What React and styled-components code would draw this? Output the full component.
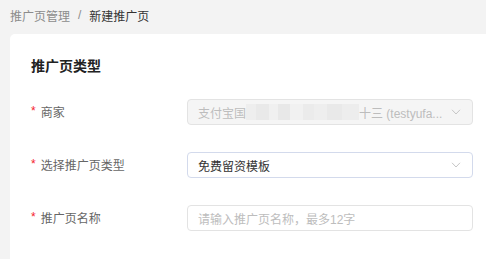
import React from "react";
import styled, { createGlobalStyle } from "styled-components";

const Global = createGlobalStyle`
  html, body {
    margin: 0;
    padding: 0;
    background: #f3f3f3;
    font-family: "Liberation Sans", "Noto Sans CJK SC", sans-serif;
  }
`;

const Page = styled.div`
  width: 486px;
  height: 259px;
  overflow: hidden;
  padding-left: 10px;
  box-sizing: border-box;
`;

const Breadcrumb = styled.div`
  height: 30px;
  margin-bottom: 4px;
  display: flex;
  align-items: center;
  gap: 8px;
  font-size: 12px;
  color: #8c8c8c;
`;

const Current = styled.span`
  color: #333;
`;

const Card = styled.div`
  background: #fff;
  border-radius: 5px 0 0 0;
  padding: 20px 13px 0 21px;
  height: 240px;
`;

const Title = styled.div`
  font-size: 14px;
  font-weight: 700;
  color: #222;
  line-height: 24px;
  margin-bottom: 21px;
`;

const Row = styled.div`
  display: flex;
  align-items: center;
  margin-bottom: 27px;
`;

const Label = styled.div`
  width: 156px;
  font-size: 12px;
  color: #666;
  display: flex;
  align-items: center;
  gap: 5px;
  margin-top: -2px;
`;

const Star = styled.span`
  color: #f5222d;
  font-size: 12px;
`;

const Field = styled.div`
  flex: 1;
  height: 26px;
  box-sizing: border-box;
  border: 1px solid ${(p) => p.$border || "#e3e3e3"};
  background: ${(p) => (p.$disabled ? "#f5f5f5" : "#fff")};
  border-radius: 4px;
  display: flex;
  align-items: center;
  padding: 0 11px 0 10px;
  font-size: 12px;
  color: ${(p) => (p.$muted ? "#bdbdbd" : "#333")};
  white-space: nowrap;
  overflow: hidden;
`;

const Value = styled.div`
  flex: 1;
  display: flex;
  align-items: center;
  overflow: hidden;
`;

const Blur = styled.span`
  display: inline-block;
  width: ${(p) => p.$w}px;
  height: 16px;
  background: ${(p) => p.$c};
`;

const Arrow = () => (
  <svg width="10" height="6" viewBox="0 0 10 6">
    <path d="M1 0.8 L5 5 L9 0.8" fill="none" stroke="#c6c6c6" strokeWidth="1" />
  </svg>
);

const blurs = [
  ["#eeeeee", 10], ["#e9e9e9", 13], ["#f0f0f0", 9], ["#e8e8e8", 12],
  ["#f1f1f1", 13], ["#ebebeb", 11], ["#eeeeee", 13], ["#e9e9e9", 15],
  ["#ededed", 17],
];

export default function App() {
  return (
    <Page>
      <Global />
      <Breadcrumb>
        <span>推广页管理</span>
        <span>/</span>
        <Current>新建推广页</Current>
      </Breadcrumb>
      <Card>
        <Title>推广页类型</Title>
        <Row>
          <Label>
            <Star>*</Star>商家
          </Label>
          <Field $disabled $muted>
            <Value>
              支付宝国
              {blurs.map(([c, w], i) => (
                <Blur key={i} $c={c} $w={w} />
              ))}
              十三 (testyufa...
            </Value>
            <Arrow />
          </Field>
        </Row>
        <Row>
          <Label>
            <Star>*</Star>选择推广页类型
          </Label>
          <Field $border="#d3daec">
            <Value>免费留资模板</Value>
            <Arrow />
          </Field>
        </Row>
        <Row>
          <Label>
            <Star>*</Star>推广页名称
          </Label>
          <Field $muted>
            <Value>请输入推广页名称，最多12字</Value>
          </Field>
        </Row>
      </Card>
    </Page>
  );
}
